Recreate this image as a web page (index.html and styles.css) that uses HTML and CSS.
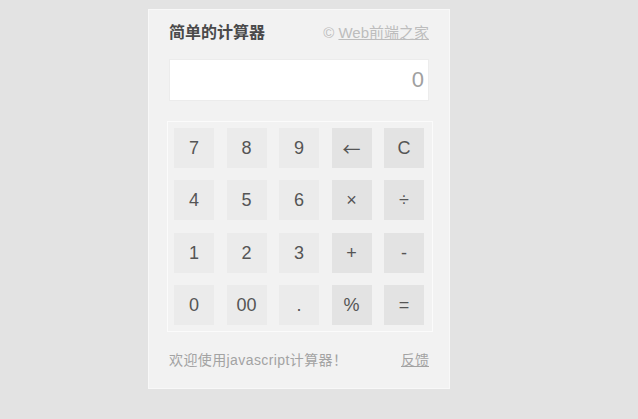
FILE: index.html
```html
<!DOCTYPE html>
<html lang="zh-CN">
<head>
<meta charset="utf-8">
<title>简单的计算器</title>
<link rel="stylesheet" href="styles.css">
</head>
<body>
<div class="calc">
  <div class="calc-head">
    <h1 class="calc-title">简单的计算器</h1>
    <span class="calc-copy">© <a href="#">Web前端之家</a></span>
  </div>
  <div class="calc-display">0</div>
  <div class="calc-keys">
    <button class="key">7</button>
    <button class="key">8</button>
    <button class="key">9</button>
    <button class="key op arrow">←</button>
    <button class="key op">C</button>
    <button class="key">4</button>
    <button class="key">5</button>
    <button class="key">6</button>
    <button class="key op">×</button>
    <button class="key op">÷</button>
    <button class="key">1</button>
    <button class="key">2</button>
    <button class="key">3</button>
    <button class="key op">+</button>
    <button class="key op">-</button>
    <button class="key">0</button>
    <button class="key">00</button>
    <button class="key">.</button>
    <button class="key op">%</button>
    <button class="key op">=</button>
  </div>
  <div class="calc-foot">
    <span class="calc-welcome">欢迎使用javascript计算器！</span>
    <a class="calc-feedback" href="#">反馈</a>
  </div>
</div>
</body>
</html>
```

FILE: styles.css
```css
html, body {
  margin: 0;
  padding: 0;
  background: #e3e3e3;
}
body {
  font-family: "Liberation Sans", Arial, "Noto Sans CJK SC", sans-serif;
  padding: 9px 0 0 148px;
}
.calc {
  width: 260px;
  padding: 0 20px;
  background: #f2f2f2;
  border: 1px solid #f8f8f8;
}
.calc-head {
  height: 42px;
  display: flex;
  justify-content: space-between;
  align-items: center;
}
.calc-title {
  margin: 0;
  font-size: 16px;
  font-weight: bold;
  color: #4a4a4a;
  font-family: "Liberation Sans", "Noto Sans CJK SC", sans-serif;
}
.calc-copy {
  font-size: 15px;
  color: #bdbdbd;
  font-family: "Liberation Sans", "Noto Sans CJK SC", sans-serif;
}
.calc-copy a {
  color: #bdbdbd;
  text-decoration: underline;
}
.calc-display {
  margin-top: 7px;
  height: 40px;
  line-height: 40px;
  background: #fff;
  border: 1px solid #ececec;
  text-align: right;
  padding-right: 4px;
  font-size: 22px;
  color: #a0a0a0;
}
.calc-keys {
  margin: 20px 0 0 -2px;
  width: 251px;
  padding: 6px 7px 6px 6px;
  border: 1px solid #fbfbfb;
  display: grid;
  grid-template-columns: repeat(5, 40px);
  grid-auto-rows: 40px;
  column-gap: 12.5px;
  row-gap: 12.33px;
}
.key {
  margin: 0;
  padding: 0;
  border: none;
  background: #ebebeb;
  color: #555;
  font-family: "Liberation Sans", Arial, sans-serif;
  font-size: 18px;
  line-height: 40px;
}
.key.op {
  background: #e3e3e3;
}
.key.arrow {
  font-family: "Noto Sans CJK SC", sans-serif;
  font-size: 18px;
}
.calc-foot {
  margin-top: 18px;
  padding-bottom: 18px;
  line-height: 20px;
  display: flex;
  justify-content: space-between;
  font-size: 14px;
  color: #a3a3a3;
}
.calc-welcome {
  letter-spacing: 0.4px;
}
.calc-feedback {
  color: #a3a3a3;
  text-decoration: underline;
}
```
